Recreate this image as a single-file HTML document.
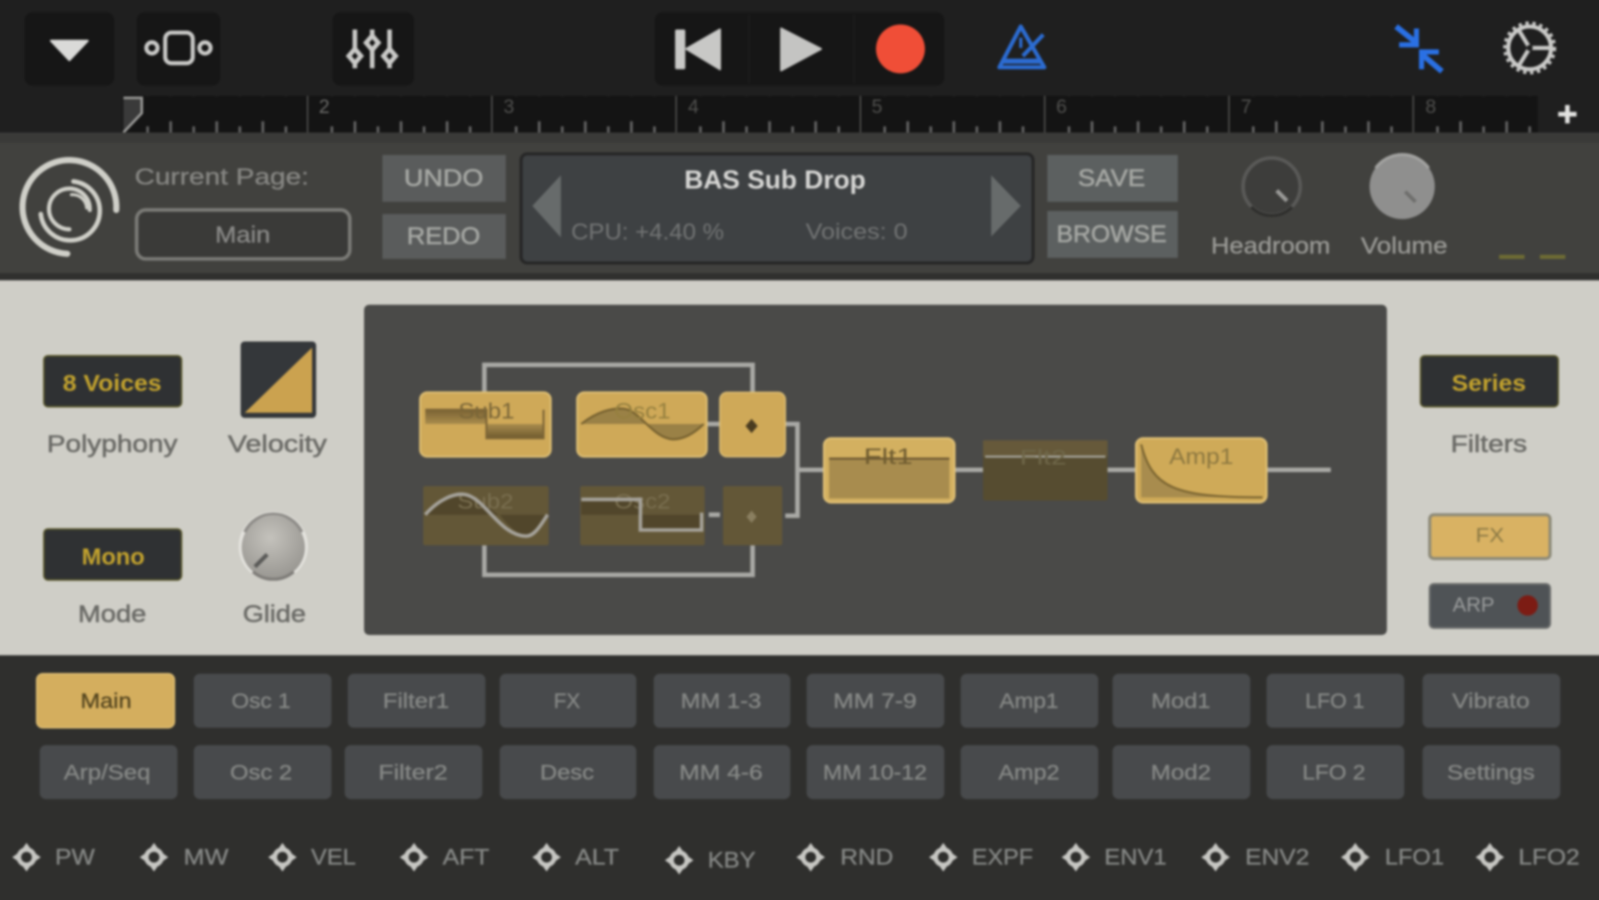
<!DOCTYPE html>
<html><head><meta charset="utf-8"><title>Synth</title>
<style>
html,body{margin:0;padding:0;background:#2f2f2d;width:1599px;height:900px;overflow:hidden}
#clip{position:absolute;left:0;top:0;width:1599px;height:900px;overflow:hidden;contain:paint}
svg{display:block;position:absolute;left:-10px;top:-10px;width:1619px;height:920px;filter:blur(.95px)}
text{font-family:"Liberation Sans",sans-serif;text-anchor:middle;dominant-baseline:central}
.tab{fill:#484a4c}
.t{font-size:21px;fill:#868886;stroke:#868886;stroke-width:.3}
.b{font-size:23px;fill:#8a8a88;stroke:#8a8a88;stroke-width:.3}
.h{font-size:24px;fill:#a6a8a4;stroke:#a6a8a4;stroke-width:.5}
.d{font-size:24px;fill:#6a6a66;stroke:#6a6a66;stroke-width:.5}
.y{font-size:23px;fill:#c2a22e;font-weight:bold}
</style></head><body>
<div id="clip">
<svg viewBox="-9.806 -9.811 1587.612 902.622" preserveAspectRatio="none" xmlns="http://www.w3.org/2000/svg">
<defs>
<pattern id="tk" x="121.5" y="94" width="180.7" height="36" patternUnits="userSpaceOnUse">
<rect x="0" y="0" width="2.5" height="36" fill="#636361" transform="translate(179.6 0)"/>
<g fill="#666">
<rect x="22" y="30" width="2.5" height="6"/><rect x="44.6" y="25" width="2.5" height="11"/><rect x="67.2" y="30" width="2.5" height="6"/><rect x="89.8" y="25" width="2.5" height="11"/><rect x="112.4" y="30" width="2.5" height="6"/><rect x="135" y="25" width="2.5" height="11"/><rect x="157.6" y="30" width="2.5" height="6"/>
</g></pattern>
<linearGradient id="band" x1="0" y1="0" x2="0" y2="1"><stop offset="0" stop-color="#7a6233"/><stop offset="1" stop-color="#a98c4d"/></linearGradient>
<linearGradient id="band2" x1="0" y1="0" x2="0" y2="1"><stop offset="0" stop-color="#a98c4d"/><stop offset="1" stop-color="#6f5a2f"/></linearGradient>
<radialGradient id="gl" cx=".45" cy=".35" r=".7"><stop offset="0" stop-color="#c4c2bc"/><stop offset="1" stop-color="#96948f"/></radialGradient>
<g id="dm">
<circle r="7.500" fill="#2f2f2d" stroke="#c6c6c2" stroke-width="4.500"/>
<path d="M0-14 L5-7 H-5Z M0 14 L5 7 H-5Z M-14 0 L-7-5 V5Z M14 0 L7-5 V5Z" fill="#c6c6c2"/>
</g>
</defs>

<!-- top bar -->
<rect x="-20" y="-20" width="1608" height="151" fill="#1f1f1f"/>
<rect x="24" y="12" width="88" height="72" rx="8" fill="#161616"/>
<rect x="134" y="12" width="82" height="72" rx="8" fill="#161616"/>
<rect x="326" y="12" width="80" height="72" rx="8" fill="#161616"/>
<rect x="642" y="12" width="284" height="72" rx="8" fill="#161616"/>
<rect x="733" y="14" width="3" height="68" fill="#1a1a1a"/><rect x="836" y="14" width="3" height="68" fill="#1a1a1a"/>

<path d="M50 40 H86 L68 59Z" fill="#dadad8" stroke="#dadad8" stroke-width="2" stroke-linejoin="round"/>
<g fill="none" stroke="#c9c9c7" stroke-width="4">
<rect x="162" y="32" width="27" height="30" rx="6"/>
<circle cx="149" cy="47" r="5.500"/><circle cx="201" cy="47" r="5.500"/>
</g>
<g stroke="#c9c9c7" stroke-width="4.500" fill="#161616">
<path d="M348 29V67M365 29V67M382 29V67" fill="none"/>
<path d="M348 48l6 7-6 7-6-7z"/><path d="M365 35l6 7-6 7-6-7z"/><path d="M382 48l6 7-6 7-6-7z"/>
</g>
<rect x="662" y="29" width="10" height="39" rx="1.500" fill="#c8c8c6"/>
<path d="M706 29V68L673 48Z" fill="#c8c8c6" stroke="#c8c8c6" stroke-linejoin="round" stroke-width="2"/>
<path d="M766 28V69L805 48Z" fill="#c4c4c2" stroke="#c4c4c2" stroke-linejoin="round" stroke-width="2"/>
<circle cx="883" cy="48" r="24" fill="#f04e37"/>

<g fill="none" stroke="#2c6cd2" stroke-width="4" stroke-linejoin="round">
<path d="M1001 26 L1024 66 H980Z"/>
<path d="M984 60H1020" stroke-width="5"/>
<path d="M1003 55 L1023 34"/>
<path d="M1001 37V47" stroke-width="3"/>
</g>

<g stroke="#2a70e4" stroke-width="5.500" fill="none">
<path d="M1369 26 L1389 42"/><path d="M1389 28V44H1372" stroke-width="5"/>
<path d="M1414 70 L1394 53"/><path d="M1394 68V51H1411" stroke-width="5"/>
</g>

<g fill="none" stroke="#c9c9c7">
<circle cx="1500" cy="47" r="21" stroke-width="4"/>
<circle cx="1500" cy="47" r="24" stroke-width="4" stroke-dasharray="3.200 3.600"/>
<path d="M1500 47H1521M1500 47L1489 29M1500 47L1489 65" stroke-width="4"/>
</g>
<circle cx="1500" cy="47" r="3" fill="#1f1f1f"/>

<!-- ruler -->
<rect x="120" y="94" width="1388" height="37" fill="#141414"/>
<rect x="121.5" y="94" width="1386" height="36" fill="url(#tk)"/>
<text x="318" y="105" style="font-size:19px;fill:#6b6b69">2</text><text x="499" y="105" style="font-size:19px;fill:#50504e">3</text><text x="680" y="105" style="font-size:19px;fill:#50504e">4</text><text x="860" y="105" style="font-size:19px;fill:#50504e">5</text><text x="1041" y="105" style="font-size:19px;fill:#50504e">6</text><text x="1222" y="105" style="font-size:19px;fill:#50504e">7</text><text x="1403" y="105" style="font-size:19px;fill:#50504e">8</text>
<path d="M121 96H139V111L121 130Z" fill="#3a3a3a"/>
<path d="M121 96H139V111L121 130" fill="none" stroke="#9a9a98" stroke-width="2.500"/>
<path d="M1537 103V121M1528 112H1546" stroke="#e2e2e0" stroke-width="4.500"/>

<!-- header -->
<rect x="-20" y="130" width="1608" height="145" fill="#41413e"/>
<rect x="-20" y="130" width="1608" height="10" fill="#3a3a38"/>
<rect x="-20" y="268" width="1608" height="7" fill="#30302e"/>
<g fill="none" stroke="#cfcfc8" stroke-linecap="round">
<path d="M114 206 A46 46 0 1 0 66 249" stroke-width="6"/>
<path d="M72 178 A29 29 0 1 1 40 210" stroke-width="4.500"/>
<path d="M88 206 A20 20 0 1 0 68 225" stroke-width="4"/>
<path d="M70 191 A14 14 0 0 1 85 204" stroke-width="3"/>
</g>
<text x="217.500" y="173" class="b" textLength="171" lengthAdjust="spacingAndGlyphs" style="fill:#868682">Current Page:</text>
<rect x="134" y="206" width="209" height="48" rx="9" fill="#3a3a38" stroke="#7b7b77" stroke-width="3.500"/>
<text x="238" y="230" class="b" textLength="54" lengthAdjust="spacingAndGlyphs">Main</text>
<rect x="375" y="152" width="121" height="46" fill="#5a5c5c"/>
<rect x="375" y="210" width="121" height="44" fill="#5a5c5c"/>
<text x="435" y="175" class="h" textLength="78" lengthAdjust="spacingAndGlyphs">UNDO</text>
<text x="435" y="232" class="h" textLength="72" lengthAdjust="spacingAndGlyphs">REDO</text>
<rect x="511" y="151" width="502" height="107" rx="6" fill="#3e4143" stroke="#262626" stroke-width="3"/>
<path d="M550 172V233L522 202Z M972 172V232L1001 202Z" fill="#676b6b"/>
<text x="760" y="177" textLength="178" lengthAdjust="spacingAndGlyphs" style="font-size:25px;font-weight:bold;fill:#d6d6d4">BAS Sub Drop</text>
<text x="635" y="227" textLength="150" lengthAdjust="spacingAndGlyphs" style="font-size:23px;fill:#727474">CPU: +4.40 %</text>
<text x="840" y="227" textLength="100" lengthAdjust="spacingAndGlyphs" style="font-size:22px;fill:#727474">Voices: 0</text>
<rect x="1027" y="152" width="128" height="46" fill="#5c6060"/>
<rect x="1027" y="207" width="128" height="46" fill="#5c6060"/>
<text x="1090" y="175" class="h" textLength="66" lengthAdjust="spacingAndGlyphs">SAVE</text>
<text x="1090" y="230" class="h" textLength="108" lengthAdjust="spacingAndGlyphs">BROWSE</text>
<circle cx="1247" cy="183" r="28" fill="#3d3d3b" stroke="#5a5a58" stroke-width="3.500"/>
<path d="M1227 203A28 28 0 0 0 1267 203" fill="none" stroke="#2e2e2c" stroke-width="3"/>
<path d="M1252 187L1262 197" stroke="#9a9a98" stroke-width="4"/>
<circle cx="1375" cy="183" r="32" fill="#8f8f8e"/>
<path d="M1349 165A32 32 0 0 1 1401 165" fill="none" stroke="#a2a2a0" stroke-width="3"/>
<path d="M1378 188L1388 198" stroke="#6e6e6c" stroke-width="3.500"/>
<text x="1246" y="241" class="b" textLength="117" lengthAdjust="spacingAndGlyphs" style="fill:#9a9a96;stroke:#9a9a96">Headroom</text>
<text x="1377" y="241" class="b" textLength="85" lengthAdjust="spacingAndGlyphs" style="fill:#9a9a96;stroke:#9a9a96">Volume</text>
<rect x="1470" y="250" width="25" height="4" fill="#6e6c34"/><rect x="1510" y="250" width="25" height="4" fill="#6e6c34"/>

<!-- light panel -->
<rect x="-20" y="275" width="1608" height="368" fill="#cfcec7"/>
<rect x="43" y="349" width="135" height="50" rx="4" fill="#2f3133" stroke="#5c5a2c" stroke-width="1.500"/>
<text x="110" y="376" class="y" textLength="97" lengthAdjust="spacingAndGlyphs">8 Voices</text>
<text x="110" y="436" class="d" textLength="128" lengthAdjust="spacingAndGlyphs">Polyphony</text>
<rect x="236" y="335" width="74" height="75" rx="4" fill="#34373a"/>
<path d="M240 405L306 341V405Z" fill="#cba24f"/>
<text x="272" y="436" class="d" textLength="97" lengthAdjust="spacingAndGlyphs">Velocity</text>
<rect x="43" y="519" width="135" height="50" rx="4" fill="#2f3133" stroke="#5c5a2c" stroke-width="1.500"/>
<text x="111" y="546" class="y" textLength="62" lengthAdjust="spacingAndGlyphs">Mono</text>
<text x="110" y="603" class="d" textLength="67" lengthAdjust="spacingAndGlyphs">Mode</text>
<circle cx="268" cy="536" r="34" fill="#e4e3de"/>
<circle cx="268" cy="537" r="31" fill="url(#gl)"/>
<path d="M240 522A31 31 0 0 1 296 522" fill="none" stroke="#8e8c88" stroke-width="3"/>
<path d="M248 561A31 31 0 0 0 288 561" fill="none" stroke="#7e7c78" stroke-width="3"/>
<path d="M250 556L262 544" stroke="#5a5a58" stroke-width="4"/>
<text x="269" y="603" class="d" textLength="62" lengthAdjust="spacingAndGlyphs">Glide</text>

<!-- dark panel -->
<rect x="357" y="299" width="1003" height="324" rx="5" fill="#4a4a48"/>
<g fill="none" stroke="#a9a9a5" stroke-width="4.500">
<path d="M475 385V358H738V385"/>
<path d="M475 535V564H738V535"/>
<path d="M693 416H706"/>
<path d="M770 416H782V506H770"/>
<path d="M782 461H808"/>
<path d="M695 505H706"/>
<path d="M936 461H964M1086 461H1114M1242 461H1305"/>
</g>

<!-- Sub1 -->
<rect x="412" y="385" width="128" height="63" rx="7" fill="#cfa958" stroke="#dcbd73" stroke-width="2"/>
<path d="M417 402H477V416H417Z" fill="url(#band)"/>
<path d="M477 416H533V430H477Z" fill="url(#band2)"/>
<path d="M417 402H477V430H533V402" fill="none" stroke="#7d6536" stroke-width="2"/>
<text x="477" y="403" textLength="55" lengthAdjust="spacingAndGlyphs" style="font-size:22px;fill:#7a6638">Sub1</text>
<!-- Osc1 -->
<rect x="566" y="385" width="127" height="63" rx="7" fill="#cfa958" stroke="#dcbd73" stroke-width="2"/>
<path d="M570 416C585 404 600 400 612 401C628 403 640 430 660 431C672 431 682 424 690 416Z" fill="#9a8146"/>
<path d="M570 416C585 404 600 400 612 401C628 403 640 430 660 431C672 431 682 424 690 416" fill="none" stroke="#75602f" stroke-width="2"/>
<text x="630" y="403" textLength="55" lengthAdjust="spacingAndGlyphs" style="font-size:22px;fill:#96803f">Osc1</text>
<rect x="706" y="385" width="64" height="63" rx="7" fill="#cfa958" stroke="#dcbd73" stroke-width="1.500"/>
<path d="M737 411l6 7-6 7-6-7z" fill="#4a3c20"/>
<!-- Flt1 -->
<rect x="808" y="430" width="128" height="63" rx="7" fill="#d3b060" stroke="#e0c075" stroke-width="2"/>
<rect x="813" y="450" width="118" height="39" fill="#a88c4e"/>
<path d="M813 450H931" stroke="#6a5530" stroke-width="2"/>
<text x="871" y="448" textLength="48" lengthAdjust="spacingAndGlyphs" style="font-size:22px;fill:#6f5c30">Flt1</text>
<!-- Flt2 -->
<rect x="964" y="432" width="122" height="59" rx="2" fill="#564c30"/>
<rect x="964" y="432" width="122" height="16" fill="#66593a"/>
<path d="M966 448H1084" stroke="#a8a8a0" stroke-width="2"/>
<text x="1023" y="449" textLength="46" lengthAdjust="spacingAndGlyphs" style="font-size:21px;fill:#6f6749">Flt2</text>
<!-- Amp1 -->
<rect x="1114" y="430" width="128" height="63" rx="7" fill="#cfaa58" stroke="#e0c075" stroke-width="2"/>
<path d="M1119 436C1130 478 1150 488 1238 488H1119Z" fill="#a88c4e"/>
<path d="M1119 436C1130 478 1150 488 1238 488" fill="none" stroke="#7a6430" stroke-width="2"/>
<text x="1178" y="448" textLength="63" lengthAdjust="spacingAndGlyphs" style="font-size:22px;fill:#8d7840">Amp1</text>
<!-- Sub2 -->
<rect x="415" y="477" width="123" height="58" rx="2" fill="#635737"/>
<path d="M417 505C430 490 445 484 455 485C472 487 485 505 490 505Z" fill="#4a3f26" opacity=".7"/>
<path d="M490 505C500 518 510 526 516 525C525 523 532 512 537 505Z" fill="#4a3f26" opacity=".7"/>
<text x="476" y="492" textLength="55" lengthAdjust="spacingAndGlyphs" style="font-size:21px;fill:#7a6f50">Sub2</text>
<path d="M417 505C430 490 445 484 455 485C475 487 490 526 516 526C525 526 532 512 537 505" fill="none" stroke="#a5a29a" stroke-width="3.500"/>
<!-- Osc2 -->
<rect x="569" y="477" width="122" height="58" rx="2" fill="#635737"/>
<rect x="570" y="490" width="58" height="15" fill="#4a3f26" opacity=".7"/>
<rect x="628" y="505" width="60" height="15" fill="#4a3f26" opacity=".7"/>
<text x="630" y="492" textLength="55" lengthAdjust="spacingAndGlyphs" style="font-size:21px;fill:#7a6f50">Osc2</text>
<path d="M570 490H628V520H688V503" fill="none" stroke="#a5a29a" stroke-width="3.500"/>
<rect x="709" y="477" width="58" height="58" rx="2" fill="#635737"/>
<path d="M737 501l5 6-5 6-5-6z" fill="#8a7f60"/>

<!-- right -->
<rect x="1393" y="349" width="135" height="50" rx="4" fill="#2f3133" stroke="#5c5a2c" stroke-width="1.500"/>
<text x="1460" y="376" class="y" textLength="73" lengthAdjust="spacingAndGlyphs">Series</text>
<text x="1460" y="436" class="d" textLength="75" lengthAdjust="spacingAndGlyphs">Filters</text>
<rect x="1402" y="505" width="118" height="43" rx="4" fill="#d9b263" stroke="#8d8a78" stroke-width="3"/>
<text x="1461" y="526" textLength="28" lengthAdjust="spacingAndGlyphs" style="font-size:20px;fill:#8c7a45">FX</text>
<rect x="1402" y="573" width="118" height="43" rx="4" fill="#4f5356" stroke="#6b6d6c" stroke-width="2"/>
<text x="1445" y="594" textLength="41" lengthAdjust="spacingAndGlyphs" style="font-size:20px;fill:#9a9c9c">ARP</text>
<circle cx="1498" cy="594" r="10" fill="#7c1c14"/>

<!-- bottom -->
<rect x="-20" y="643" width="1608" height="260" fill="#2f2f2d"/>
<rect x="36" y="661" width="135" height="53" rx="6" fill="#d4ae5e" stroke="#dcbc72" stroke-width="1.500"/>
<g class="tab">
<rect x="190" y="661" width="135" height="53" rx="6"/><rect x="341" y="661" width="135" height="53" rx="6"/><rect x="490" y="661" width="134" height="53" rx="6"/><rect x="641" y="661" width="134" height="53" rx="6"/><rect x="791" y="661" width="135" height="53" rx="6"/><rect x="942" y="661" width="135" height="53" rx="6"/><rect x="1091" y="661" width="135" height="53" rx="6"/><rect x="1242" y="661" width="135" height="53" rx="6"/><rect x="1395" y="661" width="135" height="53" rx="6"/>
<rect x="39" y="731" width="135" height="53" rx="6"/><rect x="190" y="731" width="135" height="53" rx="6"/><rect x="338" y="731" width="135" height="53" rx="6"/><rect x="490" y="731" width="134" height="53" rx="6"/><rect x="641" y="731" width="134" height="53" rx="6"/><rect x="791" y="731" width="135" height="53" rx="6"/><rect x="942" y="731" width="135" height="53" rx="6"/><rect x="1091" y="731" width="135" height="53" rx="6"/><rect x="1242" y="731" width="135" height="53" rx="6"/><rect x="1395" y="731" width="135" height="53" rx="6"/>
</g>
<text x="104" y="688" class="t" textLength="50" lengthAdjust="spacingAndGlyphs" style="fill:#54451f;stroke:#54451f">Main</text>
<text x="256" y="688" class="t" textLength="58" lengthAdjust="spacingAndGlyphs">Osc 1</text>
<text x="408" y="688" class="t" textLength="65" lengthAdjust="spacingAndGlyphs">Filter1</text>
<text x="556" y="688" class="t" textLength="26" lengthAdjust="spacingAndGlyphs">FX</text>
<text x="707" y="688" class="t" textLength="79" lengthAdjust="spacingAndGlyphs">MM 1-3</text>
<text x="858" y="688" class="t" textLength="82" lengthAdjust="spacingAndGlyphs">MM 7-9</text>
<text x="1009" y="688" class="t" textLength="58" lengthAdjust="spacingAndGlyphs">Amp1</text>
<text x="1158" y="688" class="t" textLength="58" lengthAdjust="spacingAndGlyphs">Mod1</text>
<text x="1309" y="688" class="t" textLength="58" lengthAdjust="spacingAndGlyphs">LFO 1</text>
<text x="1462" y="688" class="t" textLength="76" lengthAdjust="spacingAndGlyphs">Vibrato</text>
<text x="105" y="758" class="t" textLength="85" lengthAdjust="spacingAndGlyphs">Arp/Seq</text>
<text x="256" y="758" class="t" textLength="61" lengthAdjust="spacingAndGlyphs">Osc 2</text>
<text x="405" y="758" class="t" textLength="68" lengthAdjust="spacingAndGlyphs">Filter2</text>
<text x="556" y="758" class="t" textLength="53" lengthAdjust="spacingAndGlyphs">Desc</text>
<text x="707" y="758" class="t" textLength="82" lengthAdjust="spacingAndGlyphs">MM 4-6</text>
<text x="858" y="758" class="t" textLength="102" lengthAdjust="spacingAndGlyphs">MM 10-12</text>
<text x="1009" y="758" class="t" textLength="60" lengthAdjust="spacingAndGlyphs">Amp2</text>
<text x="1158" y="758" class="t" textLength="59" lengthAdjust="spacingAndGlyphs">Mod2</text>
<text x="1308" y="758" class="t" textLength="62" lengthAdjust="spacingAndGlyphs">LFO 2</text>
<text x="1462" y="758" class="t" textLength="86" lengthAdjust="spacingAndGlyphs">Settings</text>

<use href="#dm" x="26" y="841"/><use href="#dm" x="151" y="841"/><use href="#dm" x="277" y="841"/><use href="#dm" x="406" y="841"/><use href="#dm" x="536" y="841"/><use href="#dm" x="666" y="844"/><use href="#dm" x="795" y="841"/><use href="#dm" x="925" y="841"/><use href="#dm" x="1055" y="841"/><use href="#dm" x="1192" y="841"/><use href="#dm" x="1329" y="841"/><use href="#dm" x="1461" y="841"/>
<text x="73.500" y="841" class="t" textLength="39" lengthAdjust="spacingAndGlyphs" style="font-size:22px">PW</text>
<text x="202" y="841" class="t" textLength="44" lengthAdjust="spacingAndGlyphs" style="font-size:22px">MW</text>
<text x="327" y="841" class="t" textLength="44" lengthAdjust="spacingAndGlyphs" style="font-size:22px">VEL</text>
<text x="457" y="841" class="t" textLength="46" lengthAdjust="spacingAndGlyphs" style="font-size:22px">AFT</text>
<text x="585.500" y="841" class="t" textLength="43" lengthAdjust="spacingAndGlyphs" style="font-size:22px">ALT</text>
<text x="717.500" y="844" class="t" textLength="47" lengthAdjust="spacingAndGlyphs" style="font-size:22px">KBY</text>
<text x="850" y="841" class="t" textLength="52" lengthAdjust="spacingAndGlyphs" style="font-size:22px">RND</text>
<text x="983" y="841" class="t" textLength="60" lengthAdjust="spacingAndGlyphs" style="font-size:22px">EXPF</text>
<text x="1113.500" y="841" class="t" textLength="61" lengthAdjust="spacingAndGlyphs" style="font-size:22px">ENV1</text>
<text x="1252.500" y="841" class="t" textLength="63" lengthAdjust="spacingAndGlyphs" style="font-size:22px">ENV2</text>
<text x="1387" y="841" class="t" textLength="58" lengthAdjust="spacingAndGlyphs" style="font-size:22px">LFO1</text>
<text x="1519" y="841" class="t" textLength="60" lengthAdjust="spacingAndGlyphs" style="font-size:22px">LFO2</text>
</svg>
</div>
</body></html>
